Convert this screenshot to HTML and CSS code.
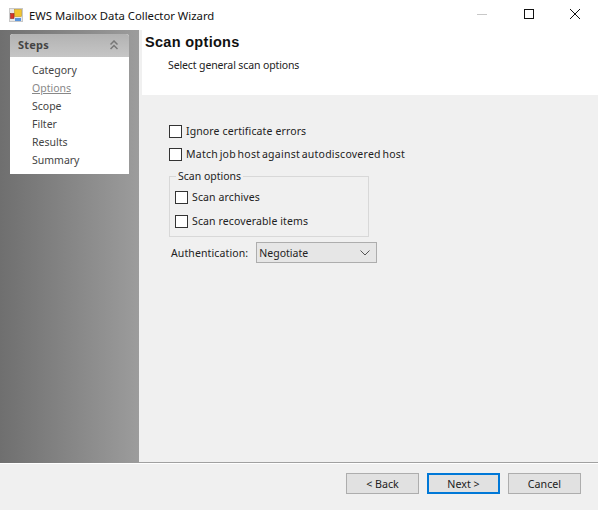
FILE: index.html
```html
<!DOCTYPE html>
<html lang="en">
<head>
    <meta charset="UTF-8">
    <title>EWS Mailbox Data Collector Wizard</title>
    <link rel="stylesheet" href="styles.css">
</head>
<body>
<div class="titlebar">
    <svg class="appicon" width="14" height="14" viewBox="0 0 14 14">
        <rect x="0.5" y="0.5" width="13" height="13" fill="#e8e8e8" stroke="#c8c8c8"/>
        <rect x="5.5" y="1.5" width="7" height="7" fill="#f2c52e" stroke="#c49a20" stroke-width="0.6"/>
        <rect x="1.5" y="5.5" width="3.5" height="5" fill="#d8342a" stroke="#8e2a20" stroke-width="0.6"/>
        <rect x="6" y="10" width="6" height="3" fill="#5a94dc"/>
    </svg>
    <span class="title">EWS Mailbox Data Collector Wizard</span>
    <div class="winbtns">
        <svg class="winbtn" width="46" height="30" viewBox="0 0 46 30"><line x1="17" y1="14.5" x2="27" y2="14.5" stroke="#c8c8c8"/></svg>
        <svg class="winbtn" width="46" height="30" viewBox="0 0 46 30"><rect x="18.5" y="9.5" width="9" height="9" fill="none" stroke="#111"/></svg>
        <svg class="winbtn" width="46" height="30" viewBox="0 0 46 30"><path d="M18 9l10 10M28 9l-10 10" fill="none" stroke="#111"/></svg>
    </div>
</div>
<div class="main">
    <div class="side">
        <div class="steps">
            <div class="stephead">
                <span>Steps</span>
                <svg width="8" height="10" viewBox="0 0 8 10"><path d="M0.5 4.5l3.5-3.5 3.5 3.5M0.5 9l3.5-3.5 3.5 3.5" fill="none" stroke="#777" stroke-width="1.5"/></svg>
            </div>
            <ul class="steplist">
                <li>Category</li>
                <li class="current">Options</li>
                <li>Scope</li>
                <li>Filter</li>
                <li>Results</li>
                <li>Summary</li>
            </ul>
        </div>
    </div>
    <div class="content">
        <div class="header">
            <h1>Scan options</h1>
            <p>Select general scan options</p>
        </div>
        <div class="form">
            <label class="check"><span class="box"></span>Ignore certificate errors</label>
            <label class="check"><span class="box"></span><span class="tight">Match job host against autodiscovered host</span></label>
            <fieldset class="group">
                <legend>Scan options</legend>
                <label class="check"><span class="box"></span>Scan archives</label>
                <label class="check"><span class="box"></span>Scan recoverable items</label>
            </fieldset>
            <div class="auth">
                <span>Authentication:</span>
                <div class="combo">
                    <span>Negotiate</span>
                    <svg width="10" height="6" viewBox="0 0 10 6"><path d="M0.5 0.5l4.5 4.5 4.5-4.5" fill="none" stroke="#555"/></svg>
                </div>
            </div>
        </div>
    </div>
</div>
<div class="footer">
    <button class="btn">&lt; Back</button>
    <button class="btn default">Next &gt;</button>
    <button class="btn">Cancel</button>
</div>
</body>
</html>
```

FILE: styles.css
```css
* {
    box-sizing: border-box;
}
html, body {
    margin: 0;
    padding: 0;
}
body {
    width: 598px;
    height: 510px;
    overflow: hidden;
    background: #f0f0f0;
    font-family: "Noto Sans", "Liberation Sans", sans-serif;
    font-size: 10.5px;
    color: #222;
    display: flex;
    flex-direction: column;
}
.titlebar {
    height: 30px;
    background: #fff;
    display: flex;
    align-items: center;
    padding-left: 9px;
}
.appicon {
    margin: 0 6px 1px 0;
}
.title {
    font-size: 11.3px;
    color: #111;
}
.winbtns {
    margin-left: auto;
    display: flex;
}
.main {
    height: 433px;
    display: flex;
}
.side {
    width: 139px;
    padding: 4px 10px 0;
    background: linear-gradient(to right, #6f6f6f, #9c9c9c);
}
.steps {
    width: 119px;
    background: #fff;
    border-radius: 3px 3px 0 0;
}
.stephead {
    height: 23px;
    padding: 0 11px 2px 8px;
    display: flex;
    align-items: center;
    justify-content: space-between;
    background: linear-gradient(to bottom, #b2b2b2, #c6c6c6);
    border-radius: 3px 3px 0 0;
    font-size: 11px;
    font-weight: bold;
    letter-spacing: 0.2px;
    color: #444;
}
.steplist {
    list-style: none;
    margin: 0;
    padding: 4px 0 5px 22px;
}
.steplist li {
    height: 18px;
    line-height: 18px;
    color: #444;
}
.steplist .current {
    color: #888;
    text-decoration: underline;
}
.content {
    flex: 1;
    padding-left: 3px;
    border-bottom: 1px solid #a0a0a0;
}
.header {
    height: 65px;
    background: #fff;
}
.header h1 {
    margin: 0;
    font-family: "Liberation Sans", sans-serif;
    font-size: 14.5px;
    letter-spacing: 0.3px;
    line-height: 16px;
    color: #111;
    padding: 4px 0 0 3px;
}
.header p {
    margin: 0;
    padding: 8px 0 0 26px;
    line-height: 15px;
    letter-spacing: -0.12px;
}
.form {
    padding: 27px 0 0 27px;
}
.check {
    display: flex;
    align-items: center;
    height: 18px;
    margin-bottom: 5px;
    letter-spacing: 0.12px;
}
.box {
    width: 13px;
    height: 13px;
    background: #fff;
    border: 1px solid #333;
    margin-right: 4px;
}
.tight {
    letter-spacing: 0.25px;
    word-spacing: -1.3px;
}
.group {
    width: 200px;
    height: 67px;
    margin: 7px 0 0;
    padding: 6px 5px 0;
    border: 1px solid #d8d8d8;
}
.group legend {
    padding: 0 2px;
    margin-left: 1px;
    line-height: 12px;
}
.group .check {
    margin-bottom: 6px;
}
.auth {
    display: flex;
    align-items: center;
    margin: 5px 0 0 2px;
    letter-spacing: 0.12px;
}
.combo {
    width: 121px;
    height: 21px;
    margin-left: 8px;
    padding: 0 6px 0 2px;
    display: flex;
    align-items: center;
    justify-content: space-between;
    background: #e6e6e6;
    border: 1px solid #adadad;
    letter-spacing: 0;
}
.footer {
    flex: 1;
    border-top: 1px solid #fff;
    display: flex;
    justify-content: flex-end;
    align-items: flex-start;
    gap: 8px;
    padding: 9px 17px 0 0;
}
.btn {
    width: 73px;
    height: 21px;
    padding: 0;
    background: #e1e1e1;
    border: 1px solid #adadad;
    font-family: "Noto Sans", "Liberation Sans", sans-serif;
    font-size: 10.7px;
    color: #222;
}
.btn.default {
    border: 2px solid #0078d7;
}
```
